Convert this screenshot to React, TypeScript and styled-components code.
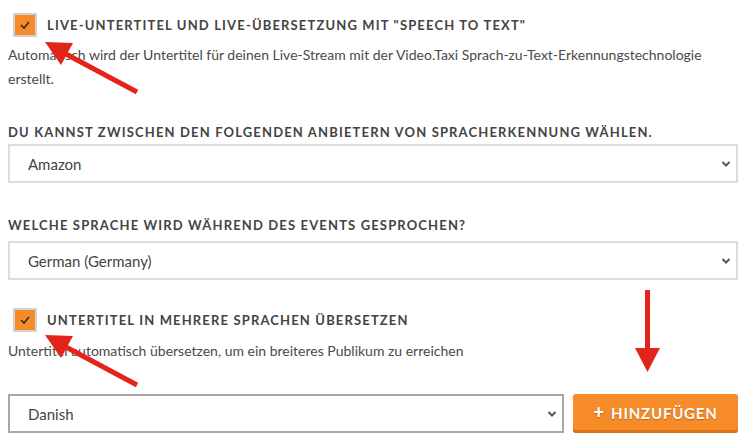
import React from "react";
import styled, { createGlobalStyle } from "styled-components";

const GlobalStyle = createGlobalStyle`
  html, body { margin: 0; padding: 0; background: #fff; }
  body { font-family: Lato, "Open Sans", sans-serif; color: #444; }
  * { box-sizing: border-box; }
`;

const Page = styled.div`
  position: relative;
  width: 746px;
  height: 444px;
  padding: 13px 8px 0 8px;
  display: flex;
  flex-direction: column;
  overflow: hidden;
`;

const CheckRow = styled.label<{ $mt?: number }>`
  display: flex;
  align-items: center;
  gap: 10px;
  height: 24px;
  padding-left: 5px;
  margin-top: ${(p) => p.$mt ?? 0}px;
`;

const Box = styled.span`
  width: 24px;
  height: 24px;
  flex: none;
  background: #f68b28;
  border: 2px solid #d2d2d2;
  display: flex;
  align-items: center;
  justify-content: center;
`;

const Heading = styled.div<{ $mt?: number }>`
  font-family: Lato, sans-serif;
  font-weight: 700;
  font-size: 13px;
  letter-spacing: 1.15px;
  line-height: 20px;
  color: #444;
  text-transform: uppercase;
  margin-top: ${(p) => p.$mt ?? 0}px;
`;

const Text = styled.p<{ $mt?: number }>`
  margin: ${(p) => p.$mt ?? 0}px 0 0 0;
  font-size: 14px;
  line-height: 24px;
  color: #4a4a4a;
`;

const SelectWrap = styled.div<{ $mt?: number; $w?: string }>`
  position: relative;
  width: ${(p) => p.$w ?? "100%"};
  margin-top: ${(p) => p.$mt ?? 0}px;
`;

const Select = styled.select<{ $dark?: boolean }>`
  appearance: none;
  -webkit-appearance: none;
  width: 100%;
  height: 39px;
  border: 2px solid ${(p) => (p.$dark ? "#a8a8a8" : "#dcdcdc")};
  border-radius: 0;
  background: #fff;
  padding: 0 30px 0 18px;
  font-family: Lato, sans-serif;
  font-size: 15px;
  color: #444;
  outline: none;
`;

const Chevron = styled.svg`
  position: absolute;
  right: 7px;
  top: 50%;
  transform: translateY(-50%);
  pointer-events: none;
`;

const BottomRow = styled.div`
  display: flex;
  gap: 9px;
  margin-top: 31px;
`;

const AddButton = styled.button`
  flex: 1;
  height: 39px;
  border: none;
  border-radius: 3px;
  background: #f68b28;
  box-shadow: inset 0 -3px 0 #d8741c;
  color: #fff;
  font-family: Lato, sans-serif;
  font-weight: 700;
  font-size: 15px;
  letter-spacing: 0.8px;
  text-shadow: 0 1px 1px rgba(120, 50, 0, 0.45);
  padding: 0 0 3px 0;
  cursor: pointer;
`;

const Plus = styled.span`
  font-size: 18px;
  font-weight: 900;
  line-height: 1;
  margin-right: 2px;
`;

const Overlay = styled.svg`
  position: absolute;
  left: 0;
  top: 0;
  pointer-events: none;
`;

const Check = () => (
  <svg width="12" height="10" viewBox="0 0 12 10">
    <path d="M2 5 L5 8 L10 2" fill="none" stroke="#2b2b2b" strokeWidth="1.6" />
  </svg>
);

const Chev = () => (
  <Chevron width="10" height="7" viewBox="0 0 10 7">
    <path d="M1.5 1.5 L5 5 L8.5 1.5" fill="none" stroke="#555" strokeWidth="2" />
  </Chevron>
);

const RED = "#e3241b";

export default function App() {
  return (
    <>
      <GlobalStyle />
      <Page>
        <CheckRow>
          <Box>
            <Check />
          </Box>
          <Heading>Live-Untertitel und Live-Übersetzung mit "Speech to Text"</Heading>
        </CheckRow>
        <Text $mt={6}>
          Automatisch wird der Untertitel für deinen Live-Stream mit der Video.Taxi Sprach-zu-Text-Erkennungstechnologie erstellt.
        </Text>
        <Heading $mt={31}>Du kannst zwischen den folgenden Anbietern von Spracherkennung wählen.</Heading>
        <SelectWrap $mt={2}>
          <Select defaultValue="Amazon">
            <option>Amazon</option>
          </Select>
          <Chev />
        </SelectWrap>
        <Heading $mt={32}>Welche Sprache wird während des Events gesprochen?</Heading>
        <SelectWrap $mt={6}>
          <Select defaultValue="German (Germany)">
            <option>German (Germany)</option>
          </Select>
          <Chev />
        </SelectWrap>
        <CheckRow $mt={28}>
          <Box>
            <Check />
          </Box>
          <Heading>Untertitel in mehrere Sprachen übersetzen</Heading>
        </CheckRow>
        <Text $mt={7}>Untertitel automatisch übersetzen, um ein breiteres Publikum zu erreichen</Text>
        <BottomRow>
          <SelectWrap $w="556px">
            <Select $dark defaultValue="Danish">
              <option>Danish</option>
            </Select>
            <Chev />
          </SelectWrap>
          <AddButton>
            <Plus>+</Plus> HINZUFÜGEN
          </AddButton>
        </BottomRow>
        <Overlay width="746" height="444" viewBox="0 0 746 444">
          <g fill={RED} stroke={RED}>
            <line x1="137" y1="92" x2="64" y2="53" strokeWidth="5" />
            <polygon points="45,42 73,43 61,65" stroke="none" />
            <line x1="137" y1="385" x2="64" y2="346" strokeWidth="5" />
            <polygon points="45,335 73,336 61,358" stroke="none" />
            <line x1="647.5" y1="290" x2="647.5" y2="352" strokeWidth="5" />
            <polygon points="635,348 660,348 647.5,372" stroke="none" />
          </g>
        </Overlay>
      </Page>
    </>
  );
}
